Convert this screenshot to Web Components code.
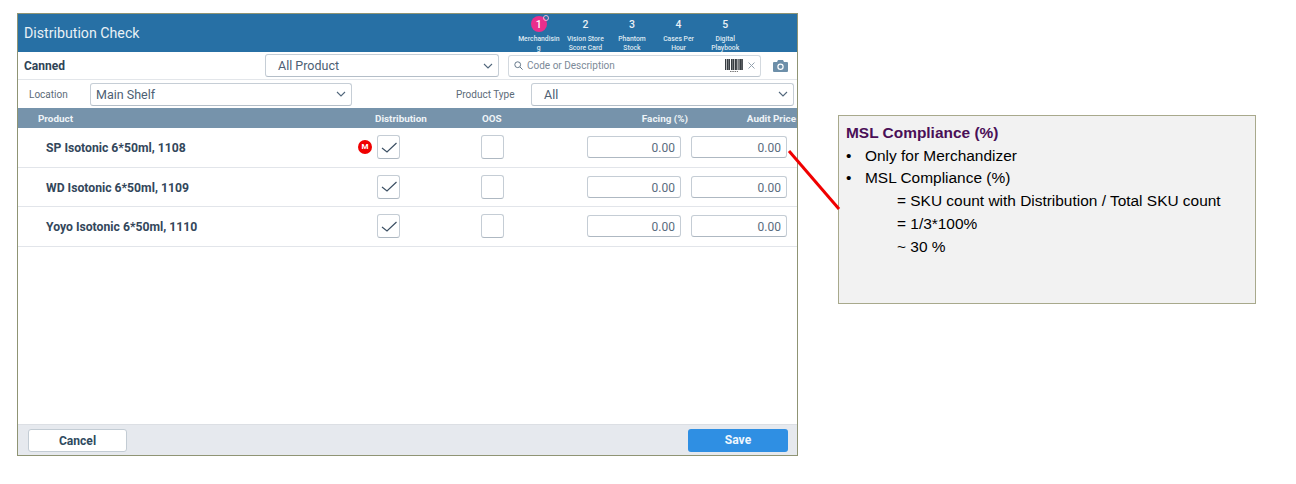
<!DOCTYPE html>
<html>
<head>
<meta charset="utf-8">
<title>Distribution Check</title>
<style>
	html, body { margin: 0; padding: 0; background: #fff; }
	body { font-family: Roboto, "Liberation Sans", sans-serif; }
</style>
</head>
<body>
<check-page>
	<check-app>
		<check-header title-text="Distribution Check"></check-header>
		<filter-bar></filter-bar>
		<location-bar></location-bar>
		<table-head></table-head>
		<product-row name="SP Isotonic 6*50ml, 1108" must></product-row>
		<product-row name="WD Isotonic 6*50ml, 1109"></product-row>
		<product-row name="Yoyo Isotonic 6*50ml, 1110"></product-row>
		<check-footer></check-footer>
	</check-app>
	<note-box slot="note"></note-box>
</check-page>

<script>
(function() {
	const chevron = `<svg width="10" height="6" viewBox="0 0 10 6"><path d="M1 1l4 4 4-4" fill="none" stroke="#51677c" stroke-width="1.1"/></svg>`;

	class CheckPage extends HTMLElement {
		constructor() {
			super();
			this.attachShadow({mode: "open"}).innerHTML = `
				<style>
				:host { display: block; position: relative; width: 1296px; height: 484px; overflow: hidden; }
				.wrap { display: flex; align-items: flex-start; padding: 13px 0 0 17px; }
				.note { display: block; margin: 102px 0 0 40px; }
				svg { position: absolute; left: 780px; top: 140px; }
				</style>
				<div class="wrap">
					<slot></slot>
					<div class="note"><slot name="note"></slot></div>
				</div>
				<svg width="70" height="80" viewBox="0 0 70 80"><line x1="9" y1="11" x2="59" y2="69" stroke="#f00000" stroke-width="3"/></svg>
			`;
		}
	}

	class CheckApp extends HTMLElement {
		constructor() {
			super();
			this.attachShadow({mode: "open"}).innerHTML = `
				<style>
				:host { display: flex; flex-direction: column; box-sizing: border-box; width: 781px; height: 443px; border: 1px solid #8f9474; background: #fff; flex: none; }
				</style>
				<slot></slot>
			`;
		}
	}

	class CheckHeader extends HTMLElement {
		constructor() {
			super();
			const steps = [
				["1", "Merchandisin g"],
				["2", "Vision Store Score Card"],
				["3", "Phantom Stock"],
				["4", "Cases Per Hour"],
				["5", "Digital Playbook"]
			];
			const items = steps.map((s, i) => `
				<div class="step${i == 0 ? " on" : ""}">
					<div class="num">${s[0]}${i == 0 ? '<i></i>' : ''}</div>
					<div class="lbl">${s[1]}</div>
				</div>`).join("");
			this.attachShadow({mode: "open"}).innerHTML = `
				<style>
				:host { display: flex; height: 38px; background: #2770a5; color: #fff; flex: none; }
				h1 { margin: 0; width: 497.5px; padding: 11px 0 0 6px; box-sizing: border-box; font: 400 14.2px/17px Roboto, sans-serif; color: #e9f1f6; }
				.steps { display: flex; }
				.step { width: 46.6px; text-align: center; }
				.num { position: relative; width: 16px; height: 16px; margin: 2px auto 0; font: 500 10.5px/17px Roboto, sans-serif; color: #eaf1f6; }
				.on .num { background: #ea2e8c; border-radius: 50%; color: #fff; }
				.on .num i { position: absolute; right: -2px; top: -1px; width: 4px; height: 4px; border: 1px solid #f7b6d6; border-radius: 50%; }
				.lbl { width: 40px; margin: 3px auto 0; font: 500 6.8px/9px Roboto, sans-serif; color: #dfe9f1; }
				.on .lbl { width: 43px; word-break: break-all; }
				</style>
				<h1>${this.getAttribute("title-text")}</h1>
				<div class="steps">${items}</div>
			`;
		}
	}

	class DropSelect extends HTMLElement {
		constructor() {
			super();
			this.attachShadow({mode: "open"}).innerHTML = `
				<style>
				:host { display: flex; align-items: center; justify-content: space-between; box-sizing: border-box; height: 23px; background: #fff; border: 1px solid #c6ced6; border-bottom-color: #b4bec8; border-radius: 3px; color: #4d6073; font: 400 12.5px Roboto, sans-serif; padding: 0 5px 0 var(--pad, 12px); }
				</style>
				<slot></slot>
				${chevron}
			`;
		}
	}

	class FilterBar extends HTMLElement {
		constructor() {
			super();
			this.attachShadow({mode: "open"}).innerHTML = `
				<style>
				:host { display: flex; align-items: center; height: 28px; box-sizing: border-box; border-bottom: 1px solid #e3e6ea; flex: none; }
				b { width: 241px; padding: 1px 0 0 6px; box-sizing: border-box; font: 700 12px Roboto, sans-serif; color: #2f4356; }
				drop-select { width: 234px; margin: 0 9px 0 6px; }
				.search { display: flex; align-items: center; box-sizing: border-box; width: 253px; height: 22px; border: 1px solid #d3d9df; border-bottom-color: #bcc5ce; border-radius: 3px; padding: 0 5px; color: #7c8a98; font: 400 10px Roboto, sans-serif; }
				.search span { flex: 1; margin-left: 4px; }
				.bars { margin-right: 5px; }
				.cam { margin-left: 12px; }
				</style>
				<b>Canned</b>
				<drop-select>All Product</drop-select>
				<div class="search">
					<svg width="9" height="9" viewBox="0 0 9 9"><circle cx="3.7" cy="3.7" r="2.9" fill="none" stroke="#64788a" stroke-width="1"/><path d="M6 6l2.6 2.6" stroke="#64788a" stroke-width="1"/></svg>
					<span>Code or Description</span>
					<svg class="bars" width="18" height="14" viewBox="0 0 18 14"><path d="M.7 0v11M2.7 0v11M4.300 0v11M6.700 0v11M8.300 0v11M10.300 0v11M11.800 0v11M14 0v11M15.700 0v11M17.200 0v11" stroke="#2e3338" stroke-width="1.3"/><path d="M5 12.500h8" stroke="#777" stroke-width="1.2" stroke-dasharray="1.500 .8"/></svg>
					<svg width="7" height="7" viewBox="0 0 7 7"><path d="M.5.5l6 6M6.500.5l-6 6" stroke="#93a1ae" stroke-width="1"/></svg>
				</div>
				<svg class="cam" width="15" height="12" viewBox="0 0 15 12"><path fill-rule="evenodd" fill="#6d8fa9" d="M1 2h3l1-2h5l1 2h3a1 1 0 0 1 1 1v8a1 1 0 0 1-1 1H1a1 1 0 0 1-1-1V3a1 1 0 0 1 1-1zM7.500 3.600a3.200 3.200 0 1 0 0 6.400a3.200 3.200 0 1 0 0-6.400z"/><circle cx="7.500" cy="6.800" r="2" fill="#6d8fa9"/></svg>
			`;
		}
	}

	class LocationBar extends HTMLElement {
		constructor() {
			super();
			this.attachShadow({mode: "open"}).innerHTML = `
				<style>
				:host { display: flex; align-items: center; height: 28px; flex: none; color: #5c6b78; font: 400 10px Roboto, sans-serif; }
				.loc { width: 72px; padding: 1px 0 0 11px; box-sizing: border-box; }
				.type { width: 75px; }
				drop-select { --pad: 5px; }
				.a { width: 262px; margin-right: 104px; }
				.b { width: 263px; --pad: 12px; }
				</style>
				<span class="loc">Location</span>
				<drop-select class="a">Main Shelf</drop-select>
				<span class="type">Product Type</span>
				<drop-select class="b">All</drop-select>
			`;
		}
	}

	class TableHead extends HTMLElement {
		constructor() {
			super();
			this.attachShadow({mode: "open"}).innerHTML = `
				<style>
				:host { display: grid; grid-template-columns: 357px 107px 60px 146px 108px; align-items: center; height: 20px; background: #7693ab; color: #eef3f7; font: 700 9.9px Roboto, sans-serif; flex: none; }
				.p { padding-left: 20px; }
				.r { text-align: right; }
				</style>
				<span class="p">Product</span>
				<span>Distribution</span>
				<span>OOS</span>
				<span class="r">Facing (%)</span>
				<span class="r">Audit Price</span>
			`;
		}
	}

	class ProductRow extends HTMLElement {
		constructor() {
			super();
			const must = this.hasAttribute("must");
			this.attachShadow({mode: "open"}).innerHTML = `
				<style>
				:host { display: grid; grid-template-columns: 340px 19px 24px 80px 23px 83px 94px 10px 96px; align-items: center; height: 39.500px; box-sizing: border-box; border-bottom: 1px solid #e2e5ea; flex: none; }
				.name { grid-column: 1; padding: 2px 0 0 28px; font: 700 12.2px Roboto, sans-serif; color: #33475b; }
				.m { grid-column: 2; width: 14px; height: 14px; border-radius: 50%; background: #f00000; color: #fff; font: 700 8px/14px Roboto, sans-serif; text-align: center; }
				.box { display: flex; align-items: center; justify-content: center; grid-column: 3; box-sizing: border-box; width: 23px; height: 24px; border: 1px solid #c5cdd5; border-bottom-color: #aeb8c2; border-radius: 3px; }
				.oos { grid-column: 5; }
				.num { grid-column: 7; box-sizing: border-box; height: 22px; border: 1px solid #c5cdd5; border-bottom-color: #aeb8c2; border-radius: 3px; padding-right: 5px; text-align: right; font: 400 12px/22px Roboto, sans-serif; color: #5a6c7d; }
				.num.p { grid-column: 9; }
				</style>
				<div class="name">${this.getAttribute("name")}</div>
				${must ? '<div class="m">M</div>' : ''}
				<div class="box"><svg width="16" height="11" viewBox="0 0 16 11"><path d="M1 6l5 4L15.500 1" fill="none" stroke="#3b4f63" stroke-width="1.2"/></svg></div>
				<div class="box oos"></div>
				<div class="num">0.00</div>
				<div class="num p">0.00</div>
			`;
		}
	}

	class CheckFooter extends HTMLElement {
		constructor() {
			super();
			this.attachShadow({mode: "open"}).innerHTML = `
				<style>
				:host { display: flex; align-items: center; justify-content: space-between; height: 31px; box-sizing: border-box; margin-top: auto; background: #e6e9ee; border-top: 1px solid #dcdfe4; padding: 1px 9px 0 10px; flex: none; }
				div { box-sizing: border-box; height: 23px; border-radius: 3px; text-align: center; font: 700 12.1px/23px Roboto, sans-serif; }
				.c { width: 99px; background: #fff; border: 1px solid #c3ccd4; color: #2f4a60; line-height: 22px; }
				.s { width: 100px; background: #2f8fe3; color: #eef6fd; }
				</style>
				<div class="c">Cancel</div>
				<div class="s">Save</div>
			`;
		}
	}

	class NoteBox extends HTMLElement {
		constructor() {
			super();
			this.attachShadow({mode: "open"}).innerHTML = `
				<style>
				:host { display: block; box-sizing: border-box; width: 418px; height: 189px; background: #f2f2f2; border: 1px solid #a8a98c; padding: 6px 0 0 7px; color: #000; font: 400 15.45px/22.700px "Liberation Sans", Arial, sans-serif; }
				h2 { margin: 0; font: 700 15.45px/22.700px "Liberation Sans", Arial, sans-serif; color: #4a0f57; }
				.li { display: flex; }
				.li span { width: 19px; }
				.in { padding-left: 51px; }
				</style>
				<h2>MSL Compliance (%)</h2>
				<div class="li"><span>•</span>Only for Merchandizer</div>
				<div class="li"><span>•</span>MSL Compliance (%)</div>
				<div class="in">= SKU count with Distribution / Total SKU count</div>
				<div class="in">= 1/3*100%</div>
				<div class="in">~ 30 %</div>
			`;
		}
	}

	customElements.define("drop-select", DropSelect);
	customElements.define("check-page", CheckPage);
	customElements.define("check-app", CheckApp);
	customElements.define("check-header", CheckHeader);
	customElements.define("filter-bar", FilterBar);
	customElements.define("location-bar", LocationBar);
	customElements.define("table-head", TableHead);
	customElements.define("product-row", ProductRow);
	customElements.define("check-footer", CheckFooter);
	customElements.define("note-box", NoteBox);
})();
</script>
</body>
</html>
